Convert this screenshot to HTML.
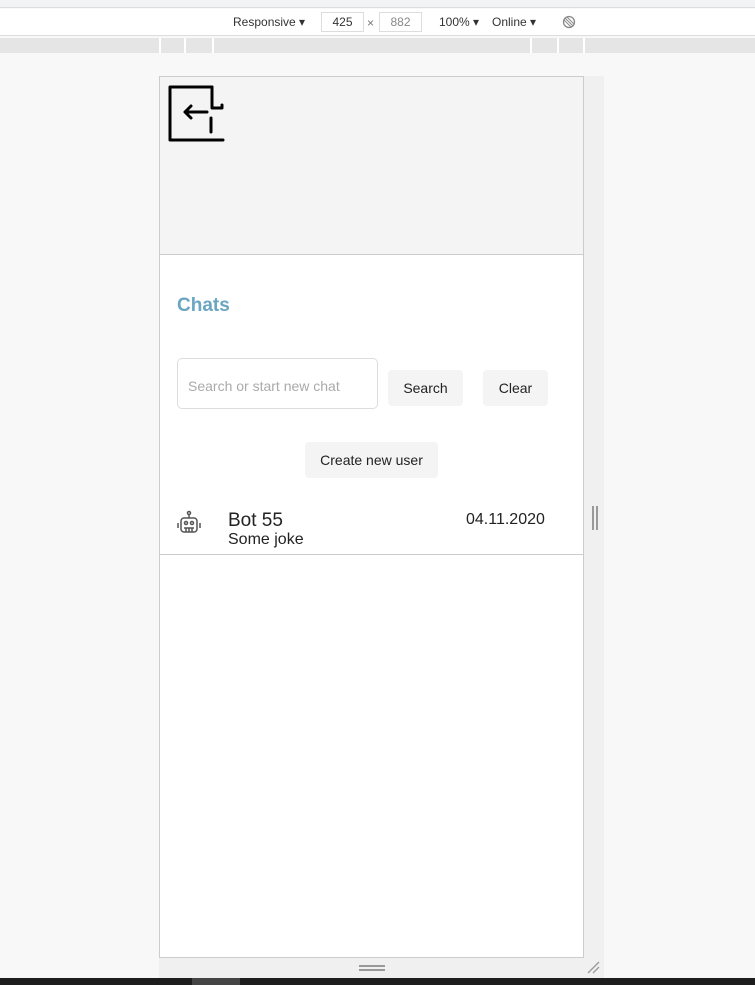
<!DOCTYPE html>
<html><head><style>
*{box-sizing:border-box;margin:0;padding:0}
body{width:755px;height:985px;background:#f8f8f8;font-family:"Liberation Sans",Arial,sans-serif;position:relative;overflow:hidden}
.abs{position:absolute}
.tb{font-size:12px;color:#333;top:15px}
.btn{position:absolute;background:#f4f4f4;border-radius:4px;font-size:14px;color:#222;display:flex;align-items:center;justify-content:center}
</style></head><body>
<div class="abs" style="left:0;top:0;width:755px;height:8px;background:#f1f3f4;border-bottom:1px solid #ddd"></div>
<div class="abs" style="left:0;top:9px;width:755px;height:27px;background:#fff;border-bottom:1px solid #ddd"></div>
<div class="abs tb" style="left:233px">Responsive ▾</div>
<div class="abs" style="left:321px;top:12px;width:43px;height:20px;border:1px solid #ddd;font-size:12px;text-align:center;line-height:18px;color:#333">425</div>
<div class="abs tb" style="left:367px;top:16px;color:#777">×</div>
<div class="abs" style="left:379px;top:12px;width:43px;height:20px;border:1px solid #ddd;font-size:12px;text-align:center;line-height:18px;color:#888">882</div>
<div class="abs tb" style="left:439px">100% ▾</div>
<div class="abs tb" style="left:492px">Online ▾</div>
<svg class="abs" style="left:562px;top:15px" width="14" height="14"><circle cx="7" cy="7" r="5.5" fill="none" stroke="#888" stroke-width="1.3"/><path d="M3 3L11 11M5 2L12 9M2 5L9 12" stroke="#888" stroke-width="1"/></svg>
<div class="abs" style="left:0;top:38px;width:755px;height:15px;background:#e5e5e5"></div>
<div class="abs" style="left:159px;top:38px;width:2px;height:15px;background:#fff"></div>
<div class="abs" style="left:184px;top:38px;width:2px;height:15px;background:#fff"></div>
<div class="abs" style="left:212px;top:38px;width:2px;height:15px;background:#fff"></div>
<div class="abs" style="left:530px;top:38px;width:2px;height:15px;background:#fff"></div>
<div class="abs" style="left:557px;top:38px;width:2px;height:15px;background:#fff"></div>
<div class="abs" style="left:583px;top:38px;width:2px;height:15px;background:#fff"></div>
<div class="abs" style="left:159px;top:76px;width:445px;height:902px;background:#f0f0f0"></div>
<div class="abs" style="left:159px;top:76px;width:425px;height:882px;background:#fff;border:1px solid #ccc"></div>
<div class="abs" style="left:160px;top:77px;width:423px;height:178px;background:#f4f4f4;border-bottom:1px solid #ccc"></div>
<svg class="abs" style="left:165px;top:82px" width="62" height="62" fill="none" stroke="#000" stroke-width="3" stroke-linecap="round" stroke-linejoin="round"><path d="M47 5H5V58H58"/><path d="M47 5V26H57V23"/><path d="M46 36V50"/><path d="M20 30H42M20 30L26 24M20 30L26 36"/></svg>
<div class="abs" style="left:177px;top:295px;font-size:19px;font-weight:bold;color:#6aa6c2">Chats</div>
<div class="abs" style="left:177px;top:358px;width:201px;height:51px;border:1px solid #ddd;border-radius:5px;font-size:14px;color:#aaa;padding-left:10px;line-height:55px">Search or start new chat</div>
<div class="btn" style="left:388px;top:370px;width:75px;height:36px">Search</div>
<div class="btn" style="left:483px;top:370px;width:65px;height:36px">Clear</div>
<div class="btn" style="left:305px;top:442px;width:133px;height:36px">Create new user</div>
<svg class="abs" style="left:176px;top:510px" width="26" height="26" fill="none" stroke="#555" stroke-width="1.5"><circle cx="13" cy="3" r="1.5"/><path d="M13 5V8"/><rect x="5" y="8" width="16" height="14" rx="3"/><path d="M2 13V18M24 13V18"/><circle cx="10" cy="13" r="1.5"/><circle cx="16" cy="13" r="1.5"/><path d="M8 18H18M10 18V22M13 18V22M16 18V22"/></svg>
<div class="abs" style="left:228px;top:510px;font-size:19px;color:#222">Bot 55</div>
<div class="abs" style="left:228px;top:531px;font-size:16px;color:#222">Some joke</div>
<div class="abs" style="left:466px;top:511px;font-size:16px;color:#222">04.11.2020</div>
<div class="abs" style="left:160px;top:554px;width:423px;height:1px;background:#ccc"></div>
<div class="abs" style="left:592px;top:506px;width:2px;height:24px;background:#999"></div>
<div class="abs" style="left:596px;top:506px;width:2px;height:24px;background:#999"></div>
<div class="abs" style="left:359px;top:965px;width:26px;height:2px;background:#999"></div>
<div class="abs" style="left:359px;top:969px;width:26px;height:2px;background:#999"></div>
<svg class="abs" style="left:587px;top:960px" width="14" height="14" stroke="#999" stroke-width="1.3"><path d="M1 13L12 2M6 13L12 7"/></svg>
<div class="abs" style="left:0;top:978px;width:755px;height:7px;background:#1d1d1d"></div>
<div class="abs" style="left:192px;top:978px;width:48px;height:7px;background:#444"></div>
</body></html>
